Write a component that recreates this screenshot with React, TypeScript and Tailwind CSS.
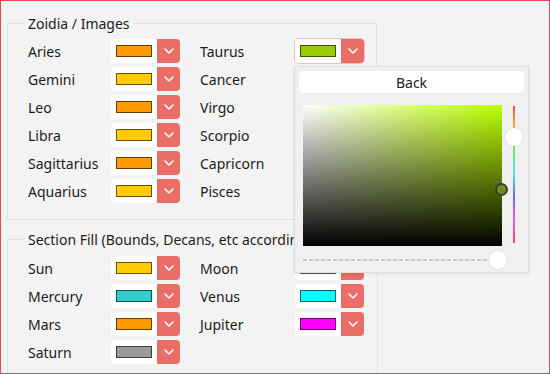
import React from "react";

type Item = { name: string; color: string };

const zodiac: [Item, Item][] = [
  [{ name: "Aries", color: "#ff9900" }, { name: "Taurus", color: "#99cc00" }],
  [{ name: "Gemini", color: "#ffcc00" }, { name: "Cancer", color: "#c0c0c0" }],
  [{ name: "Leo", color: "#ff9900" }, { name: "Virgo", color: "#99cc00" }],
  [{ name: "Libra", color: "#ffcc00" }, { name: "Scorpio", color: "#c0c0c0" }],
  [{ name: "Sagittarius", color: "#ff9900" }, { name: "Capricorn", color: "#99cc00" }],
  [{ name: "Aquarius", color: "#ffcc00" }, { name: "Pisces", color: "#c0c0c0" }],
];

const planets: [Item, Item | null][] = [
  [{ name: "Sun", color: "#ffcc00" }, { name: "Moon", color: "#c8c8c8" }],
  [{ name: "Mercury", color: "#33cccc" }, { name: "Venus", color: "#00ffff" }],
  [{ name: "Mars", color: "#ff9900" }, { name: "Jupiter", color: "#ff00ff" }],
  [{ name: "Saturn", color: "#999999" }, null],
];

function Chevron() {
  return (
    <svg width="10" height="6" viewBox="0 0 10 6" fill="none">
      <polyline points="1,1 5,5 9,1" stroke="white" strokeWidth="1.6" strokeLinecap="round" strokeLinejoin="round" />
    </svg>
  );
}

function ColorPick({ color, focused }: { color: string; focused?: boolean }) {
  return (
    <div className={`flex h-6 w-[69px] rounded-[4px] ${focused ? "ring-1 ring-[#f3bcb8]" : ""}`}>
      <div className="flex w-[46px] items-center rounded-l-[4px] bg-white pl-[5px]">
        <div className="h-[12px] w-[36px] border border-black/60" style={{ backgroundColor: color }} />
      </div>
      <div className="flex flex-1 items-center justify-center rounded-r-[4px] bg-[#e86e67]">
        <Chevron />
      </div>
    </div>
  );
}

function Row({ left, right }: { left: Item; right: Item | null }) {
  return (
    <div className="flex h-6 items-center">
      <span className="w-[83px]">{left.name}</span>
      <ColorPick color={left.color} />
      {right && (
        <>
          <span className="ml-5 w-[95px]">{right.name}</span>
          <ColorPick color={right.color} focused={right.name === "Taurus"} />
        </>
      )}
    </div>
  );
}

function Picker() {
  return (
    <div className="absolute left-[293px] top-[65px] h-[207px] w-[235px] border border-[#dedede] bg-[#f0f0f0] px-[4px] pt-[4px] shadow-[0_1px_3px_rgba(0,0,0,0.08)]">
      <div className="flex h-[22px] items-center justify-center rounded-[4px] bg-white text-[14px]">Back</div>
      <div className="mt-[12px] flex">
        <div className="relative ml-[4px] h-[141px] w-[199px] bg-[linear-gradient(to_top,#000,rgba(0,0,0,0)),linear-gradient(to_right,#fff,#bbff00)]">
          <div className="absolute left-[192px] top-[78px] h-[13px] w-[13px] rounded-full border-2 border-[#3a3a3a] bg-[#6f8f10]" />
        </div>
        <div className="relative ml-[11px] mt-[1px] h-[137px] w-[2px] bg-[linear-gradient(to_bottom,#f44,#fb3,#6e6,#5dd,#66f,#e5e,#f46)]">
          <div className="absolute -left-[8px] top-[22px] h-[18px] w-[18px] rounded-full bg-white shadow-[0_0_2px_rgba(0,0,0,0.15)]" />
        </div>
      </div>
      <div className="relative mt-[13px] ml-[4px] h-[2px] w-[196px] bg-[repeating-linear-gradient(to_right,#c8c8c8_0,#c8c8c8_4px,transparent_4px,transparent_6px)]">
        <div className="absolute left-[186px] -top-[8px] h-[18px] w-[18px] rounded-full bg-white shadow-[0_0_2px_rgba(0,0,0,0.15)]" />
      </div>
    </div>
  );
}

export default function App() {
  return (
    <div
      className="relative h-[374px] w-[550px] overflow-hidden border border-[#e8464a] bg-[#f3f3f3] text-[14px] text-[#1b1b1b]"
      style={{ fontFamily: '"Segoe UI", "Noto Sans", sans-serif' }}
    >
      <div className="ml-[6px] mt-[12px] w-[370px]">
        <fieldset className="border border-[#e2e2e2] pb-[16px] pl-5">
          <legend className="-ml-1 px-1">Zoidia / Images</legend>
          <div className="mt-[5px] flex flex-col gap-1">
            {zodiac.map(([l, r]) => (
              <Row key={l.name} left={l} right={r} />
            ))}
          </div>
        </fieldset>
        <fieldset className="mt-[9px] h-[160px] border border-[#e2e2e2] pl-5">
          <legend className="-ml-1 whitespace-nowrap px-1">Section Fill (Bounds, Decans, etc according to planet)</legend>
          <div className="mt-[6px] flex flex-col gap-1">
            {planets.map(([l, r]) => (
              <Row key={l.name} left={l} right={r} />
            ))}
          </div>
        </fieldset>
      </div>
      <Picker />
    </div>
  );
}
